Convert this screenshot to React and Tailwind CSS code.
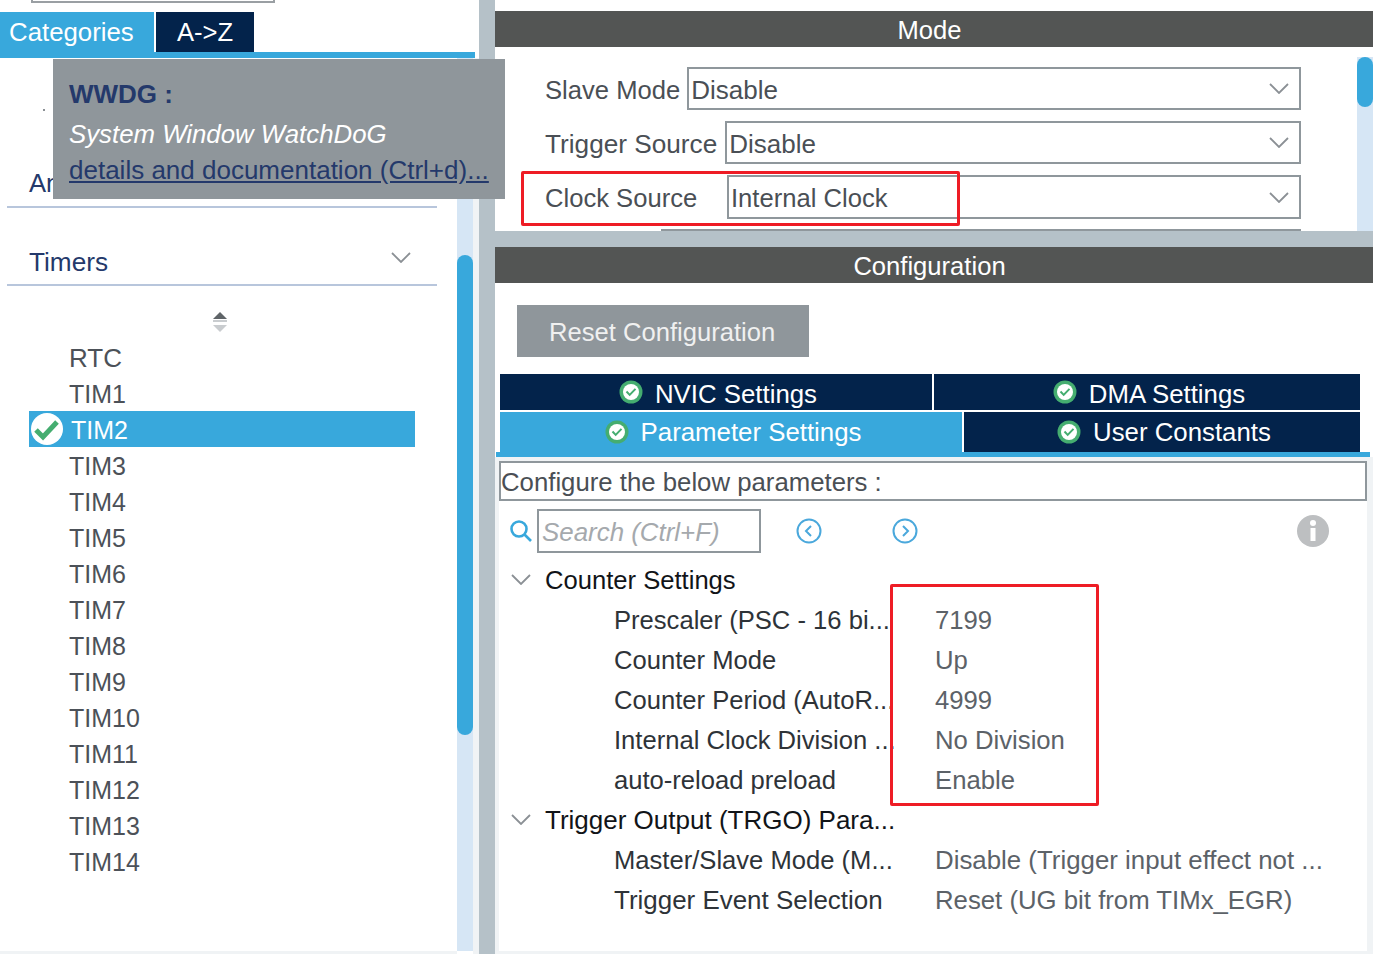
import React from "react";

const timers = ["RTC", "TIM1", "TIM2", "TIM3", "TIM4", "TIM5", "TIM6", "TIM7", "TIM8", "TIM9", "TIM10", "TIM11", "TIM12", "TIM13", "TIM14"];

const counterRows = [
  ["Prescaler (PSC - 16 bi...", "7199"],
  ["Counter Mode", "Up"],
  ["Counter Period (AutoR...", "4999"],
  ["Internal Clock Division ...", "No Division"],
  ["auto-reload preload", "Enable"],
];

const triggerRows = [
  ["Master/Slave Mode (M...", "Disable (Trigger input effect not ...", "text-[25.6px]", "text-[25.85px]"],
  ["Trigger Event Selection", "Reset (UG bit from TIMx_EGR)", "text-[25.95px]", "text-[25.75px]"],
];

function Chevron({ className }) {
  return (
    <svg viewBox="0 0 20 11" className={className} fill="none" stroke="#8b9095" strokeWidth="1.8">
      <path d="M1 1l9 9 9-9" />
    </svg>
  );
}

function SettingsCheck() {
  return (
    <svg viewBox="0 0 24 24" className="w-[24px] h-[24px] shrink-0" fill="none">
      <circle cx="12" cy="12" r="11.5" fill="#45ad70" />
      <circle cx="12" cy="12" r="8" fill="#ffffff" />
      <path d="M7.5 11.5l3.2 3.4 5.8-6" stroke="#45ad70" strokeWidth="2" />
    </svg>
  );
}

function SelectBox({ value, textClass }) {
  return (
    <div className="flex-1 flex items-center justify-between border-2 border-[#8f979c] pl-[2px] pr-[10px] h-full text-[#4a4f55]">
      <span className={`pt-[2px] ${textClass}`}>{value}</span>
      <Chevron className="w-[20px] h-[11px]" />
    </div>
  );
}

function NavCircle({ dir }) {
  return (
    <svg viewBox="0 0 26 26" className="w-[26px] h-[26px]" fill="none" stroke="#4aa8dc" strokeWidth="2">
      <circle cx="13" cy="13" r="11.5" />
      <path d={dir === "left" ? "M15 8l-5 5 5 5" : "M11 8l5 5-5 5"} />
    </svg>
  );
}

function TabButton({ label, className, labelClass }) {
  return (
    <div className={`flex items-center justify-center gap-[12px] text-white text-[25.8px] pl-[4px] ${className}`}>
      <SettingsCheck />
      <span className={labelClass}>{label}</span>
    </div>
  );
}

function TreeGroup({ title, textClass }) {
  return (
    <div className="flex items-center h-[40px] text-[#111418]">
      <Chevron className="w-[20px] h-[11px] ml-[12px] mr-[14px] mb-[2px]" />
      <span className={textClass}>{title}</span>
    </div>
  );
}

function TreeRow({ label, value, labelClass = "text-[25.6px]", valueClass = "text-[25.7px]" }) {
  return (
    <div className="flex items-center h-[40px] pl-[115px] whitespace-nowrap">
      <span className={`w-[321px] text-[#2e3338] ${labelClass}`}>{label}</span>
      <span className={`text-[#5c6268] ${valueClass}`}>{value}</span>
    </div>
  );
}

export default function App() {
  return (
    <div className="relative w-[1373px] h-[954px] flex overflow-hidden bg-white text-[25.6px] leading-[36px] font-['Liberation_Sans',Arial,sans-serif]">
      {/* left panel */}
      <div className="w-[479px] h-full flex">
        <div className="w-[457px] shrink-0 flex flex-col">
          <div className="ml-[31px] w-[244px] h-[3px] border-x-2 border-b-2 border-[#9a9fa3]" />
          <div className="flex h-[40px] mt-[9px] w-[475px] shrink-0">
            <div className="w-[154px] bg-[#38a8dc] text-white pl-[9px] leading-[40px] text-[25.8px]">Categories</div>
            <div className="w-[98px] ml-[2px] bg-[#03234b] text-white text-center leading-[40px]">A-&gt;Z</div>
          </div>
          <div className="w-[475px] h-[6px] shrink-0 bg-[#38a8dc]" />
          <div className="h-[148px] shrink-0 flex items-end pl-[29px] pb-[5px] text-[#24396b]">Analog</div>
          <div className="mx-[7px] w-[430px] h-[2px] shrink-0 bg-[#b8c6dc]" />
          <div className="h-[76px] shrink-0 flex items-end justify-between pl-[29px] pr-[46px] pb-[4px] text-[#24396b]">
            <span className="text-[26.2px]">Timers</span>
            <Chevron className="w-[20px] h-[11px] mb-[17px]" />
          </div>
          <div className="mx-[7px] w-[430px] h-[2px] shrink-0 bg-[#b8c6dc]" />
          <div className="h-[54px] shrink-0 flex items-center justify-center pr-[17px] pt-[18px]">
            <svg viewBox="0 0 16 22" className="w-[16px] h-[22px]">
              <path d="M8 1l7 7H1z" fill="#5f6468" />
              <rect x="1" y="9" width="14" height="2" fill="#c9cccf" />
              <path d="M8 21l7-7H1z" fill="#c9cccf" />
            </svg>
          </div>
          <div className="flex flex-col ml-[29px] w-[386px] text-[25px]">
            {timers.map((t) =>
              t === "TIM2" ? (
                <div key={t} className="h-[36px] -mt-[1px] mb-[1px] pt-[2px] flex items-center bg-[#38a8dc] text-white text-[25px]">
                  <svg viewBox="0 0 32 32" className="w-[32px] h-[32px] ml-[2px] mr-[8px] -mt-[2px]" fill="none">
                    <circle cx="16" cy="16" r="16" fill="#ffffff" />
                    <path d="M5 17l7 7 14-15" stroke="#45ad70" strokeWidth="5" />
                  </svg>
                  <span>{t}</span>
                </div>
              ) : (
                <div key={t} className={`h-[36px] flex items-center pl-[40px] text-[#4c5158] ${t === "RTC" ? "text-[26px]" : ""}`}>{t}</div>
              )
            )}
          </div>
          <div className="mt-auto h-[3px] shrink-0 bg-[#f0f3f5]" />
        </div>
        <div className="w-[16px] mt-[58px] mb-[3px] bg-[#d6e6f5]">
          <div className="w-[16px] h-[480px] mt-[197px] rounded-full bg-[#38a8dc]" />
        </div>
        <div className="w-[6px] mt-[58px] bg-[#f0f3f5]" />
      </div>

      {/* divider */}
      <div className="w-[16px] h-full bg-[#b5c1c8]" />

      {/* right panel */}
      <div className="w-[878px] h-full flex flex-col">
        <div className="h-[11px] shrink-0" />
        <div className="h-[36px] shrink-0 bg-[#535554] text-white text-center leading-[38px] pr-[9px]">Mode</div>
        <div className="relative h-[184px] shrink-0 flex overflow-hidden">
          <div className="w-[862px] pt-[20px] pl-[50px] pr-[56px] flex flex-col text-[#4a4f55]">
            <div className="flex h-[43px] items-center">
              <span className="mr-[7px] pt-[2px]">Slave Mode</span>
              <SelectBox value="Disable" textClass="text-[26px]" />
            </div>
            <div className="flex h-[43px] items-center mt-[11px]">
              <span className="mr-[8px] pt-[2px] text-[26.2px]">Trigger Source</span>
              <SelectBox value="Disable" textClass="text-[26px]" />
            </div>
            <div className="flex h-[44px] items-center mt-[11px]">
              <span className="w-[182px] pt-[2px]">Clock Source</span>
              <SelectBox value="Internal Clock" />
            </div>
            <div className="ml-[116px] mt-[10px] h-[2px] shrink-0 bg-[#8f979c]" />
          </div>
          <div className="w-[16px] mt-[10px] bg-[#d6e6f5]">
            <div className="w-[16px] h-[50px] rounded-full bg-[#38a8dc]" />
          </div>
          <div className="absolute left-[26px] top-[124px] w-[439px] h-[55px] border-[3px] border-[#ee1c25] rounded-[2px]" />
        </div>
        <div className="h-[16px] shrink-0 bg-[#b5c1c8]" />
        <div className="h-[36px] shrink-0 bg-[#535554] text-white text-center leading-[38px] pr-[9px]">Configuration</div>

        <div className="pt-[22px] pl-[22px] shrink-0">
          <div className="w-[292px] h-[52px] bg-[#8f969b] text-[#f0f0f0] flex items-center pl-[32px] pt-[2px]">Reset Configuration</div>
        </div>
        <div className="mt-[17px] ml-[5px] w-[860px] shrink-0 flex">
          <TabButton label="NVIC Settings" labelClass="pt-[4px]" className="w-[432px] h-[36px] bg-[#03234b]" />
          <TabButton label="DMA Settings" labelClass="pt-[4px]" className="flex-1 ml-[2px] h-[36px] bg-[#03234b]" />
        </div>
        <div className="mt-[2px] ml-[5px] w-[860px] shrink-0 flex">
          <TabButton label="Parameter Settings" className="w-[462px] h-[40px] bg-[#38a8dc]" />
          <TabButton label="User Constants" className="flex-1 ml-[2px] h-[40px] bg-[#03234b]" />
        </div>
        <div className="ml-[1px] w-[874px] h-[5px] shrink-0 bg-[#38a8dc]" />

        <div className="flex-1 min-h-0 bg-[#f0f3f5] pt-[4px] pl-[4px] pr-[6px] flex">
          <div className="relative w-[868px] h-[490px] bg-white flex flex-col">
            <div className="h-[40px] shrink-0 border-2 border-[#8f979c] text-[#4a4f55] text-[25.75px] pt-[2px] flex items-center">Configure the below parameters :</div>
            <div className="h-[44px] mt-[8px] shrink-0 flex items-center">
              <svg viewBox="0 0 24 24" className="w-[24px] h-[24px] ml-[10px] mr-[4px]" fill="none" stroke="#38a8dc" strokeWidth="2.6">
                <circle cx="10" cy="10" r="7.5" />
                <path d="M15.5 15.5l6.5 6.5" />
              </svg>
              <div className="w-[224px] h-[44px] border-2 border-[#8f979c] pl-[3px] pt-[2px] flex items-center italic text-[#a5a9ad] text-[25.9px]">Search (Ctrl+F)</div>
              <div className="ml-[35px]"><NavCircle dir="left" /></div>
              <div className="ml-[70px]"><NavCircle dir="right" /></div>
              <svg viewBox="0 0 32 32" className="w-[32px] h-[32px] ml-[379px]">
                <circle cx="16" cy="16" r="16" fill="#bdbfc1" />
                <circle cx="16" cy="8" r="3" fill="#ffffff" />
                <rect x="13.5" y="13" width="5" height="13" fill="#ffffff" />
              </svg>
            </div>
            <div className="mt-[7px] flex flex-col">
              <TreeGroup title="Counter Settings" />
              {counterRows.map(([label, value]) => (
                <TreeRow key={label} label={label} value={value} />
              ))}
              <TreeGroup title="Trigger Output (TRGO) Para..." textClass="text-[26px]" />
              {triggerRows.map(([label, value, labelClass, valueClass]) => (
                <TreeRow key={label} label={label} value={value} labelClass={labelClass} valueClass={valueClass} />
              ))}
            </div>
            <div className="absolute left-[391px] top-[123px] w-[209px] h-[222px] border-[3px] border-[#ee1c25] rounded-[2px]" />
          </div>
        </div>
      </div>

      {/* tooltip */}
      <div className="absolute left-[53px] top-[59px] w-[452px] h-[140px] bg-[#8f969b] pl-[16px] pt-[17px] flex flex-col whitespace-nowrap text-[26px]">
        <span className="h-[40px] font-bold text-[#24396b]">WWDG :</span>
        <span className="h-[36px] italic text-white text-[25.8px]">System Window WatchDoG</span>
        <span className="underline text-[#24396b]">details and documentation (Ctrl+d)...</span>
      </div>
      <div className="absolute left-[43px] top-[109px] w-[2px] h-[2px] bg-[#8b9095]" />
    </div>
  );
}
